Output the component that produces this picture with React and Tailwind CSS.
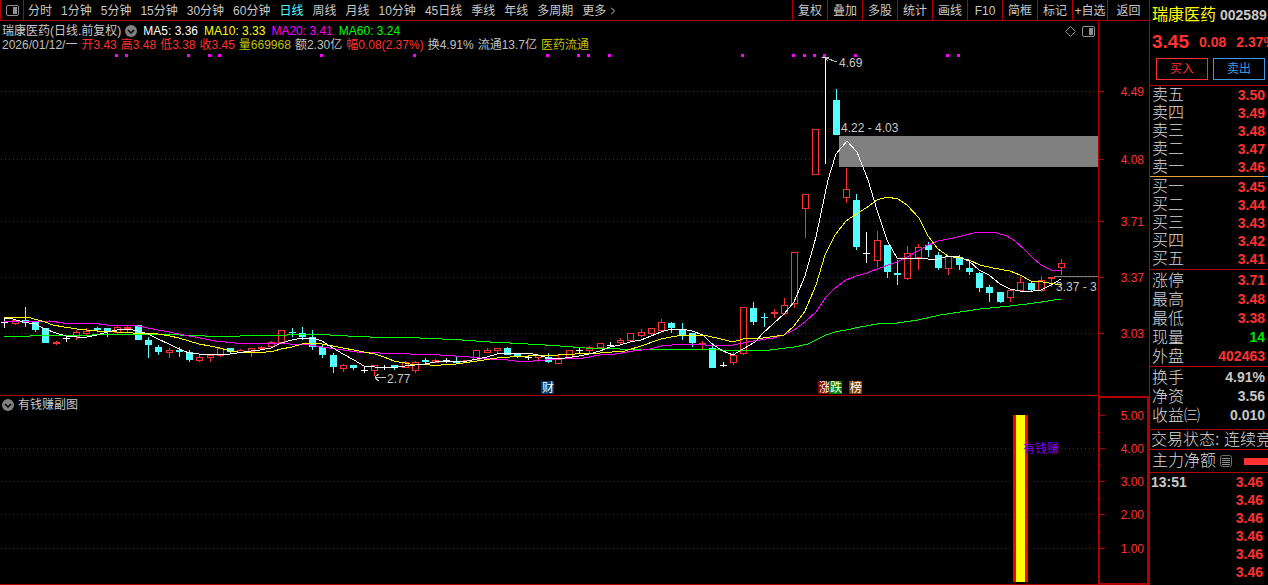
import { ChevronRight } from 'lucide-react'

const periods = [
  '分时', '1分钟', '5分钟', '15分钟', '30分钟', '60分钟', '日线', '周线',
  '月线', '10分钟', '45日线', '季线', '年线', '多周期', '更多'
]

const tools = ['复权', '叠加', '多股', '统计', '画线', 'F10', '简框', '标记', '+自选', '返回']

const averages = [
  { text: 'MA5: 3.36', color: 'text-white' },
  { text: 'MA10: 3.33', color: 'text-[#ffff00]' },
  { text: 'MA20: 3.41', color: 'text-[#ff00ff]' },
  { text: 'MA60: 3.24', color: 'text-[#00ff00]' }
]

const quote = [
  { text: '2026/01/12/一', color: 'text-[#c0c0c0]' },
  { text: '开3.43', color: 'text-[#ff3232]' },
  { text: '高3.48', color: 'text-[#ff3232]' },
  { text: '低3.38', color: 'text-[#ff3232]' },
  { text: '收3.45', color: 'text-[#ff3232]' },
  { text: '量669968', color: 'text-[#c0c000]' },
  { text: '额2.30亿', color: 'text-[#c0c0c0]' },
  { text: '幅0.08(2.37%)', color: 'text-[#ff3232]' },
  { text: '换4.91%', color: 'text-[#c0c0c0]' },
  { text: '流通13.7亿', color: 'text-[#c0c0c0]' }
]

// [x, type, body top, body bottom, wick top, wick bottom]
// u = up (hollow), f = up with a thin body, d = down, c = unchanged
const candles = [
  [4, 'c', 322, 323, 317, 328], [15, 'u', 320, 324, 320, 325], [25, 'd', 320, 323, 307, 327],
  [35, 'd', 322, 330, 322, 332], [45, 'd', 328, 343, 328, 343], [56, 'f', 342, 344, 341, 345],
  [66, 'c', 338, 339, 336, 342], [76, 'u', 332, 337, 330, 340], [86, 'u', 331, 334, 328, 336],
  [97, 'd', 328, 330, 327, 331], [107, 'd', 328, 332, 328, 337], [117, 'u', 327, 333, 326, 333],
  [127, 'f', 327, 329, 326, 332], [138, 'd', 325, 340, 325, 340], [148, 'd', 340, 345, 337, 358],
  [158, 'd', 347, 352, 345, 355], [169, 'u', 350, 353, 348, 358], [179, 'd', 350, 352, 347, 357],
  [189, 'd', 352, 360, 350, 362], [199, 'u', 357, 361, 355, 362], [210, 'u', 355, 358, 354, 362],
  [220, 'u', 348, 356, 348, 357], [230, 'd', 348, 352, 348, 354], [240, 'u', 350, 353, 349, 353],
  [251, 'u', 348, 352, 348, 357], [261, 'f', 347, 349, 346, 350], [271, 'u', 342, 347, 341, 347],
  [281, 'u', 330, 343, 330, 343], [292, 'd', 332, 333, 328, 337], [302, 'd', 333, 337, 327, 340],
  [312, 'd', 337, 347, 330, 350], [322, 'd', 347, 355, 345, 358], [333, 'd', 355, 367, 353, 373],
  [343, 'u', 365, 369, 364, 372], [353, 'd', 365, 368, 365, 370], [364, 'c', 370, 371, 367, 373],
  [374, 'u', 365, 371, 365, 376], [384, 'c', 367, 368, 365, 370], [394, 'd', 365, 368, 365, 370],
  [405, 'u', 362, 368, 361, 368], [415, 'u', 362, 371, 361, 373], [425, 'd', 360, 362, 358, 363],
  [435, 'u', 360, 363, 359, 363], [446, 'c', 360, 361, 358, 363], [456, 'd', 361, 363, 357, 364],
  [466, 'u', 360, 363, 360, 363], [476, 'u', 350, 360, 350, 360], [487, 'u', 350, 353, 348, 353],
  [497, 'u', 348, 351, 348, 353], [507, 'd', 348, 355, 347, 355], [517, 'd', 353, 357, 353, 358],
  [528, 'c', 357, 358, 355, 360], [538, 'u', 355, 358, 355, 362], [548, 'd', 357, 362, 353, 363],
  [558, 'u', 359, 364, 355, 364], [569, 'u', 350, 358, 350, 358], [579, 'c', 350, 351, 348, 353],
  [589, 'u', 347, 351, 346, 353], [600, 'u', 343, 348, 343, 348], [610, 'c', 345, 346, 342, 347],
  [620, 'u', 340, 343, 338, 345], [630, 'u', 333, 341, 333, 341], [641, 'u', 332, 336, 329, 337],
  [651, 'u', 328, 334, 328, 336], [661, 'u', 322, 331, 319, 332], [671, 'd', 323, 328, 322, 333],
  [682, 'd', 330, 335, 323, 340], [692, 'd', 333, 343, 333, 347], [702, 'f', 343, 345, 341, 349],
  [712, 'd', 348, 368, 343, 368], [723, 'c', 365, 366, 362, 367], [733, 'u', 355, 363, 352, 365],
  [743, 'u', 307, 354, 307, 355], [753, 'd', 308, 322, 302, 325], [764, 'd', 317, 318, 313, 327],
  [774, 'f', 312, 314, 309, 318], [784, 'u', 305, 314, 298, 315], [794, 'u', 252, 304, 252, 308],
  [805, 'u', 194, 209, 194, 238], [815, 'u', 129, 175, 129, 175], [825, 'c', 57, 58, 57, 164],
  [836, 'd', 100, 135, 89, 135], [846, 'u', 189, 198, 168, 203], [856, 'd', 200, 247, 194, 250],
  [866, 'c', 253, 254, 232, 263], [877, 'u', 240, 261, 231, 267], [887, 'd', 245, 272, 245, 278],
  [897, 'd', 273, 275, 260, 285], [907, 'u', 253, 279, 246, 280], [918, 'u', 247, 258, 244, 270],
  [928, 'd', 245, 250, 242, 257], [938, 'd', 255, 268, 252, 270], [948, 'u', 256, 269, 256, 275],
  [959, 'd', 257, 265, 255, 270], [969, 'd', 268, 272, 262, 275], [979, 'd', 273, 288, 272, 292],
  [989, 'd', 287, 293, 285, 302], [1000, 'd', 292, 302, 292, 303], [1010, 'u', 290, 298, 290, 302],
  [1020, 'u', 282, 291, 277, 291], [1031, 'd', 283, 290, 282, 292], [1041, 'u', 280, 291, 276, 292],
  [1051, 'f', 277, 279, 277, 287], [1061, 'u', 263, 268, 259, 275]
]

const maLines = [
  {
    color: '#00ff00',
    points: '4,336 30,336 32,335 92,335 95,334 150,334 180,335 205,336 240,336 250,335 287,335 300,334 327,334 330,335 348,336 370,337 398,337 420,338 442,339 462,340 490,342 510,343 545,345 560,346 585,348 620,349 708,349 720,350 743,351 770,350 794,347 808,344 816,340 826,335 835,332 846,330 860,327 877,324 897,323 918,320 940,315 980,309 1010,306 1027,304 1041,302 1061,299'
  },
  {
    color: '#ff00ff',
    points: '4,322 50,321 63,323 92,323 107,325 133,325 143,327 153,329 169,332 184,335 200,338 215,341 235,343 270,343 310,345 322,347 343,350 357,352 380,353 410,354 440,355 470,357 490,359 500,359 515,361 533,361 558,359 583,358 600,355 615,354 633,351 650,349 661,346 672,345 690,344 720,346 733,345 753,341 773,338 784,335 794,330 805,322 816,312 826,297 835,288 846,280 856,276 867,273 877,269 897,262 907,257 918,251 928,245 938,241 953,238 969,234 980,232 997,233 1007,236 1015,241 1025,250 1033,258 1041,265 1051,270 1061,271'
  },
  {
    color: '#ffff00',
    points: '4,317 27,317 38,320 45,322 53,325 64,327 77,329 97,331 117,332 133,333 158,334 170,336 179,338 189,341 199,344 210,346 220,348 230,351 238,352 266,352 274,351 281,349 292,347 302,344 312,343 322,344 333,346 343,348 354,350 364,352 375,354 384,357 394,361 410,364 430,365 441,365 456,364 477,361 497,358 510,357 528,356 558,355 575,354 600,353 625,351 641,346 661,339 682,335 703,335 717,338 733,342 743,339 763,338 784,335 794,326 805,311 816,285 825,255 835,235 846,221 856,214 866,208 877,200 887,197 898,199 907,205 919,218 928,236 938,249 948,256 959,258 969,260 980,265 993,268 1010,271 1020,275 1031,281 1043,282 1061,285'
  },
  {
    color: '#ffffff',
    points: '4,318 13,319 23,322 35,324 45,329 56,333 66,336 77,337 87,337 97,335 107,332 117,330 128,329 138,331 148,334 158,339 169,344 179,349 189,353 199,354 210,355 230,354 237,353 251,351 260,350 271,348 281,343 292,340 302,338 312,338 322,341 333,348 343,354 354,360 364,366 375,367 398,367 405,366 425,364 435,362 446,361 467,361 477,359 487,357 497,354 507,353 518,353 528,353 538,355 548,358 558,359 579,356 589,354 600,351 610,347 620,345 630,342 641,340 651,336 661,332 671,329 682,329 692,331 703,335 712,344 723,351 733,355 743,349 755,342 763,333 773,324 784,314 794,302 805,276 816,237 828,180 836,154 847,141 857,152 868,180 877,210 887,240 897,258 907,259 918,258 928,259 938,259 948,256 959,257 969,261 979,270 989,275 1000,284 1010,289 1020,291 1033,291 1041,290 1051,285 1061,279'
  }
]

const signals = [
  116, 126, 188, 209, 219, 321, 414, 547, 578, 588, 609, 742, 793, 804, 814, 824, 855, 947, 958
]

const priceTicks = [
  { y: 91, label: '4.49' },
  { y: 159, label: '4.08' },
  { y: 221, label: '3.71' },
  { y: 277, label: '3.37' },
  { y: 333, label: '3.03' }
]

const subTicks = [
  { y: 415, label: '5.00' },
  { y: 448, label: '4.00' },
  { y: 481, label: '3.00' },
  { y: 514, label: '2.00' },
  { y: 548, label: '1.00' }
]

const badges = [
  { x: 541, text: '财', fill: '#003a6c' },
  { x: 818, text: '涨', fill: '#800000' },
  { x: 829, text: '跌', fill: '#008000' },
  { x: 849, text: '榜', fill: '#804000' }
]

const red = 'text-[#ff3232]'
const gray = 'text-[#c8c8c8]'

const asks = [['卖五', '3.50', red], ['卖四', '3.49', red], ['卖三', '3.48', red], ['卖二', '3.47', red], ['卖一', '3.46', red]]
const bids = [['买一', '3.45', red], ['买二', '3.44', red], ['买三', '3.43', red], ['买四', '3.42', red], ['买五', '3.41', red]]
const limits = [['涨停', '3.71', red], ['最高', '3.48', red], ['最低', '3.38', red], ['现量', '14', 'text-[#00e600]'], ['外盘', '402463', red]]
const basics = [['换手', '4.91%', gray], ['净资', '3.56', gray], ['收益㈢', '0.010', gray]]
const trades = [['13:51', '3.46'], ['', '3.46'], ['', '3.46'], ['', '3.46'], ['', '3.46'], ['', '3.46']]

const PanelIcon = () => (
  <svg width="13" height="11" viewBox="0 0 13 11" aria-hidden="true">
    <rect x="0.5" y="0.5" width="12" height="10" rx="1.5" fill="none" stroke="#909090" />
    <rect x="7" y="2" width="4" height="7" fill="#909090" />
  </svg>
)

const RoundToggle = ({ label }) => (
  <button aria-label={label} className="block h-3 w-3 shrink-0">
    <svg width="12" height="12" viewBox="0 0 12 12" aria-hidden="true">
      <circle cx="6" cy="6" r="6" fill="#808080" />
      <path d="M3 5l3 3 3-3" fill="none" stroke="#000" strokeWidth="1.5" />
    </svg>
  </button>
)

const Candle = ({ data }) => {
  const [x, type, top, bottom, high, low] = data
  const color = type === 'd' ? '#54ffff' : type === 'c' ? '#ffffff' : '#ff3232'
  return (
    <g>
      <rect x={x} y={high} width="1" height={low - high} fill={color} />
      {type === 'u' ? (
        <rect x={x - 2.5} y={top + 0.5} width="6" height={bottom - top - 1} fill="#000" stroke={color} />
      ) : (
        <rect x={x - 3} y={top} width="7" height={bottom - top} fill={color} />
      )}
    </g>
  )
}

const Grid = ({ ticks }) => ticks.map(({ y }) => (
  <line key={y} x1="1" x2="1096" y1={y + 0.5} y2={y + 0.5} stroke="#b00000" strokeDasharray="1 3" />
))

const Axis = ({ ticks, minor = [], viewBox, start }) => (
  <svg viewBox={viewBox} className="block h-full w-full font-normal" fontSize="12">
    {ticks.map(({ y, label }) => (
      <g key={y}>
        <rect x={start} y={y} width="5" height="1" fill="#b00000" />
        <text x="1144" y={y + 5} textAnchor="end" fill="#ff3232">{label}</text>
      </g>
    ))}
    {minor.map((y) => <rect key={y} x={start} y={y} width="1" height="1" fill="#b00000" />)}
  </svg>
)

const PriceChart = () => (
  <svg viewBox="0 51 1098 344" className="block min-h-0 w-full flex-1" shapeRendering="crispEdges" fontSize="12">
    <Grid ticks={priceTicks} />
    <rect x="839" y="136" width="259" height="31" fill="#808080" />
    <rect x="1054" y="276" width="44" height="1" fill="#808080" />
    {candles.map((c) => <Candle key={c[0]} data={c} />)}
    {maLines.map((line) => (
      <polyline key={line.color} points={line.points} fill="none" stroke={line.color} />
    ))}
    {signals.map((x) => <rect key={x} x={x - 1} y="54" width="3" height="3" fill="#ff00ff" />)}

    {/* High and low pointers */}
    <path d="M826 58l11 4M825 58l4-1M825 58l3 3" fill="none" stroke="#c0c0c0" />
    <path d="M375 377.500h11M375 377l4-3M375 378l4 3" fill="none" stroke="#c0c0c0" />
    <g fill="#c8c8c8">
      <text x="839" y="67">4.69</text>
      <text x="387" y="383">2.77</text>
      <text x="841" y="132">4.22 - 4.03</text>
      <text x="1056" y="291">3.37 - 3</text>
    </g>

    {badges.map((b) => (
      <g key={b.x}>
        <rect x={b.x} y="381" width="13" height="13" fill={b.fill} />
        <text x={b.x + 1} y="392" fill="#fff">{b.text}</text>
      </g>
    ))}
  </svg>
)

const SubChart = () => (
  <svg viewBox="0 412 1098 172" className="block min-h-0 w-full flex-1" shapeRendering="crispEdges" fontSize="12">
    <Grid ticks={subTicks.slice(1)} />
    <rect x="1013" y="415" width="15" height="167" fill="#ff0000" />
    <rect x="1016" y="415" width="9" height="167" fill="#ffff00" />
    <text x="1023" y="453" fill="#8000ff">有钱赚</text>
  </svg>
)

const QuoteTable = ({ rows, label, rowClass, className }) => (
  <table aria-label={label} className={`w-full border-[#b00000] ${className}`}>
    <tbody>
      {rows.map(([name, value, color]) => (
        <tr key={name} className={rowClass}>
          <th scope="row" className="p-0 pl-0.5 text-left text-base font-light leading-[inherit] text-[#d8d8d8]">{name}</th>
          <td className={`p-0 pr-[3px] text-right text-sm font-bold leading-[inherit] ${color}`}>{value}</td>
        </tr>
      ))}
    </tbody>
  </table>
)

const Sidebar = () => (
  <aside className="w-[119px] shrink-0 overflow-hidden whitespace-nowrap border-l border-[#b00000] text-[#d8d8d8]">
    <div className="flex h-[85px] flex-col">
      <div className="flex h-[30px] items-center gap-1 pl-0.5">
        <h1 className="text-base font-normal text-[#ffff00]">瑞康医药</h1>
        <span className="text-sm font-bold text-[#c8c8c8]">002589</span>
      </div>
      <div className="flex h-6 items-center gap-[10px] pl-0.5 font-bold text-[#ff3232]">
        <span className="text-[19px]">3.45</span>
        <span className="text-sm">0.08</span>
        <span className="text-sm">2.37%</span>
      </div>
      <div className="mt-1 flex gap-[5px] pl-1.5 pr-[3px] text-xs">
        <button className="h-[22px] flex-1 border border-[#ff3232] text-[#ff3232]">买入</button>
        <button className="h-[22px] flex-1 border border-[#4098e0] text-[#4098e0]">卖出</button>
      </div>
    </div>
    <QuoteTable rows={asks} label="卖盘" rowClass="h-[18px] leading-[18px]" className="border-t" />
    <div className="flex h-px">
      <div className="flex-1 bg-[#e8a030]" />
      <div className="w-1 bg-[#4098e0]" />
    </div>
    <div className="pb-px pt-px">
      <QuoteTable rows={bids} label="买盘" rowClass="h-[18px] leading-[18px]" className="" />
    </div>
    <div className="border-y border-[#b00000] pt-px">
      <QuoteTable rows={limits} label="行情" rowClass="h-[19px] leading-[19px]" className="" />
    </div>
    <div className="h-[63px] border-b border-[#b00000] pt-px">
      <QuoteTable rows={basics} label="基本数据" rowClass="h-[19px] leading-[19px]" className="" />
    </div>
    <div className="h-5 border-b border-[#b00000] pl-px text-base font-light leading-[19px]">交易状态: 连续竞价</div>
    <div className="flex h-[23px] items-center border-b border-[#b00000] pl-0.5 text-base font-light">
      主力净额
      <button aria-label="明细" className="ml-1 shrink-0">
        <svg width="12" height="12" viewBox="0 0 12 12" aria-hidden="true">
          <rect x="0.5" y="0.5" width="11" height="11" rx="2" fill="none" stroke="#707070" />
          <path d="M2 3.500h8M2 5.500h8M2 7.500h8M2 9.500h8" stroke="#909090" />
        </svg>
      </button>
      <div className="ml-3 h-[7px] w-16 shrink-0 bg-[#ff3232]" />
    </div>
    <table aria-label="成交明细" className="w-full text-sm font-bold">
      <tbody>
        {trades.map(([time, price], i) => (
          <tr key={i} className="h-[18px] leading-[18px]">
            <td className="p-0 pl-px text-[#c8c8c8]">{time}</td>
            <td className="p-0 pr-[5px] text-right text-[#ff3232]">{price}</td>
          </tr>
        ))}
      </tbody>
    </table>
  </aside>
)

const App = () => (
  <div className="flex h-screen overflow-hidden bg-black font-['Liberation_Sans','Noto_Sans_CJK_SC',sans-serif] text-xs text-[#c8c8c8]">
    <main className="flex min-w-0 flex-1 flex-col">
      {/* Toolbar */}
      <nav className="flex h-[21px] shrink-0 items-stretch whitespace-nowrap border-b border-l border-[#b00000]">
        <button aria-label="布局" className="flex w-[23px] items-center justify-center border-r border-[#b00000]">
          <PanelIcon />
        </button>
        <div className="flex flex-1 items-center gap-[9px] overflow-hidden pl-1 pt-px">
          {periods.map((name) => (
            <button key={name} className={name === '日线' ? 'text-[#54ffff]' : ''}>{name}</button>
          ))}
          <ChevronRight className="-ml-2 h-3 w-3" strokeWidth={2} />
        </div>
        {tools.map((name) => (
          <button key={name} className="w-[35px] border-l border-[#b00000] pt-px last:w-[42px]">{name}</button>
        ))}
      </nav>

      {/* Price panel */}
      <section className="flex min-h-0 flex-1">
        <div className="flex min-w-0 flex-1 flex-col border-b border-[#b00000]">
          <header className="h-[30px] shrink-0 whitespace-nowrap pl-0.5 pt-[3px] leading-[14px]">
            <div className="flex h-3.5 items-center gap-1">
              <span>瑞康医药(日线.前复权)</span>
              <RoundToggle label="主图指标" />
              {averages.map((a) => <span key={a.text} className={`ml-0.5 ${a.color}`}>{a.text}</span>)}
              <div className="ml-auto flex items-center gap-1.5 pr-[3px]">
                <svg width="11" height="11" viewBox="0 0 11 11" aria-hidden="true">
                  <path d="M5.500 0.500l5 5-5 5-5-5z" fill="none" stroke="#909090" />
                </svg>
                <PanelIcon />
              </div>
            </div>
            <div className="flex h-3.5 items-center gap-1">
              {quote.map((q) => <span key={q.text} className={q.color}>{q.text}</span>)}
              <a href="#" className="text-[#c0c000]">医药流通</a>
            </div>
          </header>
          <PriceChart />
        </div>
        <div className="w-[51px] shrink-0 border-l border-[#b00000]">
          <Axis ticks={priceTicks} viewBox="1099 21 50 375" start={1099} />
        </div>
      </section>

      {/* Indicator panel */}
      <section className="flex h-[189px] shrink-0">
        <div className="flex min-w-0 flex-1 flex-col border-b border-[#b00000]">
          <header className="flex h-4 shrink-0 items-center gap-1 pl-0.5 pt-px">
            <RoundToggle label="副图指标" />
            <span>有钱赚副图</span>
          </header>
          <SubChart />
        </div>
        <div className="w-[51px] shrink-0 border-2 border-[#b00000]">
          <Axis ticks={subTicks} minor={[432, 465, 498, 531]} viewBox="1100 398 47 185" start={1100} />
        </div>
      </section>
    </main>
    <Sidebar />
  </div>
)

export default App
